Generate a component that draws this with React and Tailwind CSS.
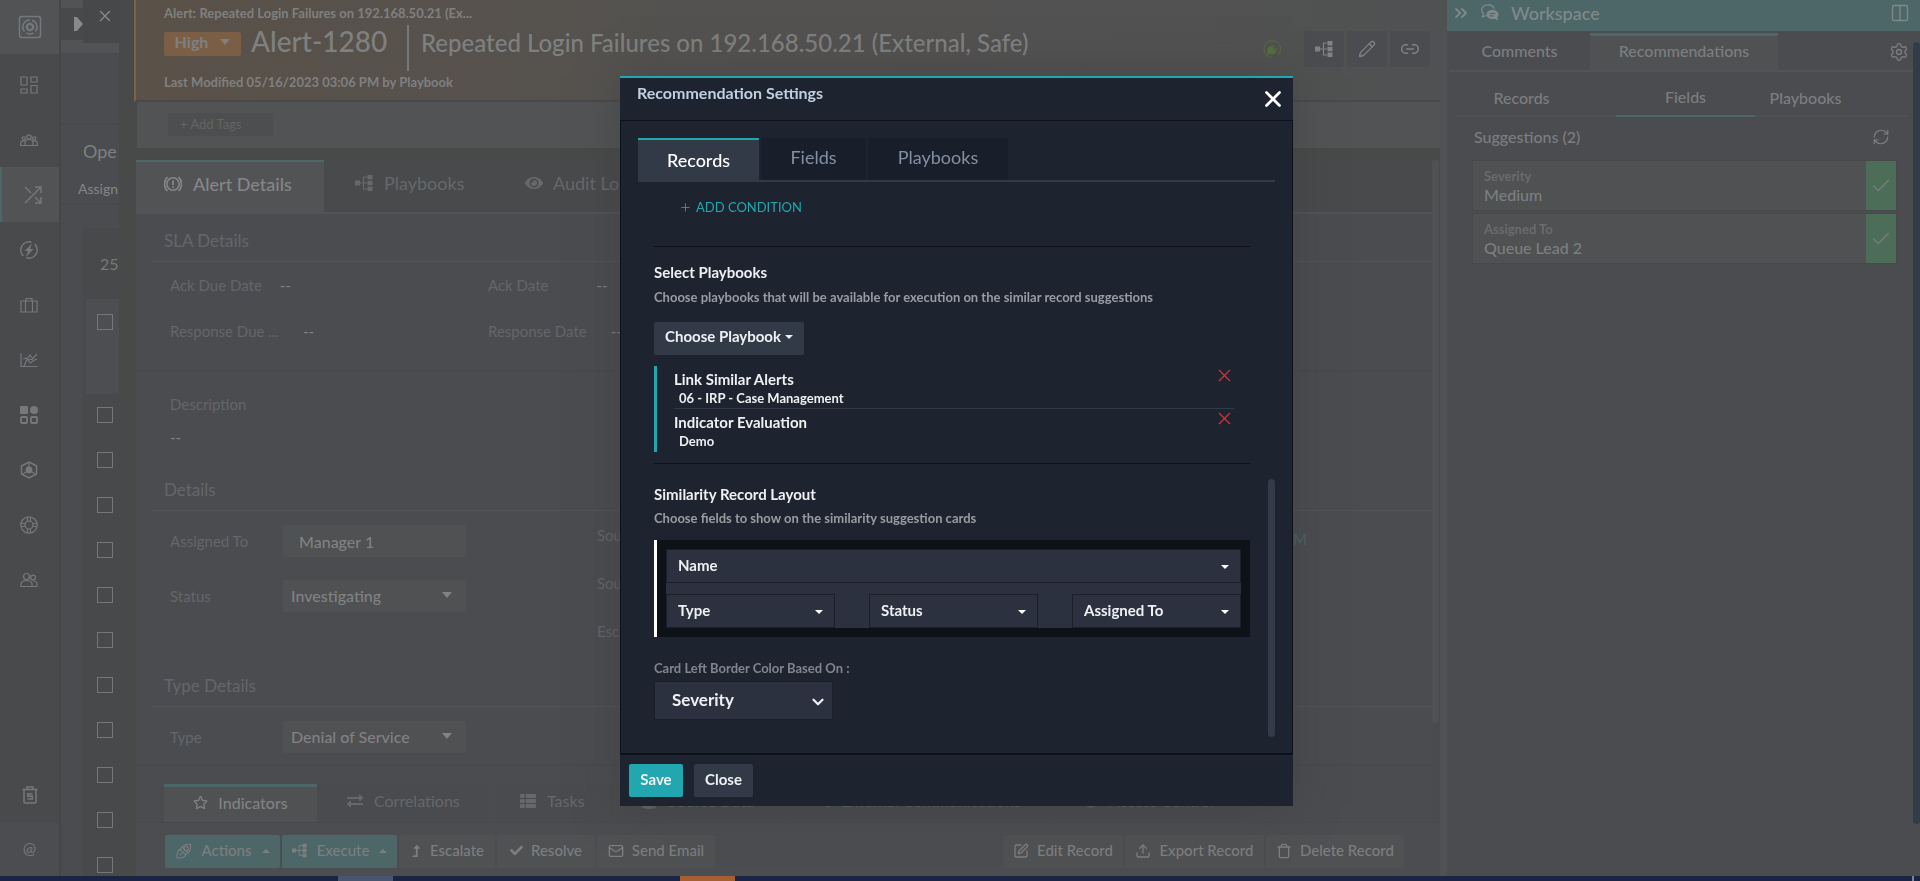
import React from "react"
import {
  X,
  ChevronsRight,
  Check,
  ChevronDown,
  Settings,
  RefreshCw,
  Columns2,
  Pencil,
  Upload,
  SquarePen,
  Trash,
  Mail,
  Plus,
  Link2,
} from "lucide-react"
import {
  FaCheck,
  FaEye,
  FaRegStar,
  FaThList,
  FaExchangeAlt,
  FaLevelUpAlt,
  FaDatabase,
  FaRegComments,
  FaGlobe,
} from "react-icons/fa"

const Svg = ({ size = 18, className, children }) => (
  <svg
    width={size}
    height={size}
    viewBox="0 0 18 18"
    fill="none"
    stroke="currentColor"
    strokeWidth="1.2"
    className={className}
    aria-hidden="true"
  >
    {children}
  </svg>
)

const FlowIcon = ({ size = 18, className }) => (
  <Svg size={size} className={className}>
    <path d="M0 6.500h5v5H0zM12.500 1h5v4.500h-5zM12.500 6.700h5v4.600h-5zM12.500 12.500h5V17h-5z" fill="currentColor" stroke="none" />
    <path d="M5 9h7.500M12.500 3H8.500v12h4" />
  </Svg>
)

const LogoIcon = () => (
  <svg width="24" height="24" viewBox="0 0 24 24" fill="none" stroke="currentColor" strokeWidth="1.500" aria-hidden="true">
    <rect x="1.500" y="1.500" width="21" height="21" rx="2.500" />
    <path d="M6.500 16.500A7 7 0 0 1 12 5M14 5.300a7 7 0 0 1 3.500 11M15.500 18a7 7 0 0 1-7 0" />
    <circle cx="12" cy="12" r="3" strokeWidth="2.200" />
    <path d="M12 7.500V9M12 15v1.500M7.500 12H9M15 12h1.500" />
  </svg>
)

const DashboardIcon = () => (
  <Svg>
    <path d="M1 1h6v8H1zM11 1h6v5h-6zM1 13h6v4H1zM11 9.500h6V17h-6z" />
  </Svg>
)

const TeamIcon = () => (
  <Svg>
    <circle cx="9" cy="6" r="2.200" />
    <circle cx="3.800" cy="7.500" r="1.700" />
    <circle cx="14.200" cy="7.500" r="1.700" />
    <path d="M5 14.500v-2.500a4 3.500 0 0 1 8 0v2.500zM5 14.500H.6v-2c0-2 2-3 4.400-2.500M13 14.500h4.400v-2c0-2-2-3-4.400-2.500" />
  </Svg>
)

const ShuffleIcon = () => (
  <Svg className="ml-2">
    <path d="M1 17 17 1M11 1h6v6M1 1l6 6M11 11l6 6M17 11v6h-6" strokeWidth="1.400" />
  </Svg>
)

const BoltIcon = () => (
  <Svg>
    <path d="M11.500 1.200a8.200 8.200 0 0 0-8.200 13.700M6.500 16.800a8.200 8.200 0 0 0 8.200-13.700" strokeWidth="1.500" />
    <path d="M12 2.500 4.500 10H8l-2 6 7.500-8H10z" fill="currentColor" stroke="none" />
  </Svg>
)

const CaseIcon = () => (
  <Svg>
    <path d="M1 5h16v11H1zM5.500 5v11M12.500 5v11M6 5V2.500h6V5" />
  </Svg>
)

const ChartIcon = () => (
  <Svg>
    <path d="M1 2.500v13h16.500M4 15l3-6.500h5L17 3M3.500 8l3-1 4 5 3-2.500 3.500-1.500M8 7l2-3 3 4" />
  </Svg>
)

const WidgetIcon = () => (
  <Svg>
    <rect x="0" y="0" width="8" height="8" rx="1" fill="currentColor" stroke="none" />
    <circle cx="14" cy="4" r="4" fill="currentColor" stroke="none" />
    <rect x="1" y="11" width="6" height="6" rx="1" strokeWidth="1.800" />
    <rect x="11" y="11" width="6" height="6" rx="1" strokeWidth="1.800" />
  </Svg>
)

const HexIcon = () => (
  <Svg>
    <path d="M9 1l7.500 4v8L9 17l-7.500-4V5z" strokeWidth="1.500" />
    <circle cx="9" cy="9" r="3.400" fill="currentColor" stroke="none" />
    <path d="M9 1v8M9 9l-6 4M9 9l6 4" />
  </Svg>
)

const LifebuoyIcon = () => (
  <Svg>
    <circle cx="9" cy="9" r="8.200" />
    <circle cx="9" cy="9" r="4" />
    <path d="M7.500 1v4M10.500 1v4M7.500 13v4M10.500 13v4M1 7.500h4M1 10.500h4M13 7.500h4M13 10.500h4" />
  </Svg>
)

const UsersIcon = () => (
  <Svg>
    <circle cx="6.500" cy="5.500" r="3" />
    <circle cx="13" cy="6.500" r="2.400" />
    <path d="M1 15.500v-2c0-2.500 2-4 5.500-4s5.500 1.500 5.500 4v2zM12 15.500h5V13c0-2-1.500-3-4-3" />
  </Svg>
)

const RecycleIcon = () => (
  <Svg>
    <path d="M1.500 3.500h15M6 3.500V1h6v2.500M3 4v12c0 .6.4 1 1 1h10c.6 0 1-.4 1-1V4" strokeWidth="1.500" />
    <path d="M11.500 8H6.700v2.300h4.600v2.600H6.500" strokeWidth="1.500" />
  </Svg>
)

const AlertIcon = () => (
  <Svg>
    <circle cx="9" cy="9" r="6.200" strokeWidth="1.600" />
    <path d="M9 5.500V10M9 11.300v1.500" strokeWidth="1.800" />
    <path d="M3.500 2a9.500 9.500 0 0 0 0 14M14.500 2a9.500 9.500 0 0 1 0 14" strokeWidth="1.600" />
  </Svg>
)

const CapsuleIcon = () => (
  <Svg size={16}>
    <path d="M7 4.500C9 2 12 1 16.500 1.500 17 6 16 9 13.500 11zM4.500 7 11 13.500M7 4.500 4.500 7l6.500 6.500 2.500-2.500z" />
    <circle cx="11.500" cy="6.500" r="2.500" />
    <path d="M4.500 7C1.500 8.500.8 12.500 1.200 16.800 5.500 17.200 9.500 16.500 11 13.500M4 14l3-3" />
  </Svg>
)

const PlugIcon = () => (
  <svg width="18" height="18" viewBox="0 0 18 18" fill="none" stroke="currentColor" aria-hidden="true">
    <path d="M15 15A8.300 8.300 0 1 0 9 17.300" strokeWidth="1" />
    <path d="M3.500 14.500l1.300-2.300c-1.300-2.400-.3-5.200 2.700-6.200l.8 1 2.200-2.200.9.900L9.700 7.500l2 2 2-1.600.7.900-2 2 .7.900c-1.200 2.600-4 3.300-6.300 2z" fill="currentColor" stroke="none" />
  </svg>
)

const ChatIcon = () => (
  <Svg>
    <path d="M5 11.500 1.500 13l1-3C1.300 8.800.7 7.500.7 6c0-3 2.800-5.200 6.300-5.200 3 0 5.600 1.700 6.200 4" />
    <path d="M11.500 6C8 6 5.500 8 5.500 10.500S8 15 11.500 15c.8 0 1.500-.1 2.200-.3l3.500 1.800-1-3c.8-.8 1.300-1.800 1.300-3C17.500 8 15 6 11.500 6z" fill="currentColor" stroke="none" />
    <path d="M8.500 9.500h6M8.500 11.800h4" stroke="#4d6668" />
  </Svg>
)

const Caret = ({ className }) => (
  <svg width="8" height="4" viewBox="0 0 8 4" className={className} aria-hidden="true">
    <path d="M0 0h8L4 4z" fill="currentColor" />
  </svg>
)

const navItems = [
  { name: "Dashboard", icon: <DashboardIcon /> },
  { name: "Queues", icon: <TeamIcon /> },
  { name: "Incident Response", icon: <ShuffleIcon />, active: true },
  { name: "Automation", icon: <BoltIcon /> },
  { name: "Cases", icon: <CaseIcon /> },
  { name: "Reports", icon: <ChartIcon /> },
  { name: "Widgets", icon: <WidgetIcon /> },
  { name: "Content Hub", icon: <HexIcon /> },
  { name: "Help", icon: <LifebuoyIcon /> },
  { name: "Users", icon: <UsersIcon /> },
]

const NavBar = () => (
  <nav className="w-[61px] shrink-0 flex flex-col bg-[#484a4b] border-r-2 border-[#444647] text-[#76797c]">
    <a href="#home" aria-label="Home" className="h-[54px] shrink-0 flex items-center justify-center bg-[#515354]">
      <LogoIcon />
    </a>
    <div className="pt-[3px] flex flex-col pr-px">
      {navItems.map((item) => (
        <a
          key={item.name}
          href="#nav"
          aria-label={item.name}
          className={
            item.active
              ? "h-[55px] -mr-px pr-1 flex items-center justify-center bg-[#515354] border-l-2 border-[#4d6668]"
              : "h-[55px] flex items-center justify-center"
          }
        >
          {item.icon}
        </a>
      ))}
    </div>
    <a href="#bin" aria-label="Recycle bin" className="mt-auto h-14 flex items-center justify-center">
      <RecycleIcon />
    </a>
    <a href="#mentions" aria-label="Mentions" className="h-[53px] flex items-center justify-center bg-[#4c4d50] text-base pb-1">
      @
    </a>
  </nav>
)

const rows = [1, 2, 3, 4, 5, 6, 7, 8, 9, 10, 11]

const QueueColumn = () => (
  <div className="w-[73px] shrink-0 flex bg-[#484949] overflow-hidden">
    <div className="w-[58px] flex flex-col bg-[#4b4c50] overflow-hidden whitespace-nowrap">
      <div className="h-[53px] shrink-0 bg-[#515354] flex">
        <div className="mt-2 h-8 w-[22px] shrink-0 bg-[#47494a] flex items-center justify-end">
          <svg width="9" height="14" viewBox="0 0 9 14" className="text-[#87898a]" aria-hidden="true">
            <path d="M0 0h3l6 7-6 7H0z" fill="currentColor" />
          </svg>
        </div>
        <button aria-label="Close panel" className="h-[43px] w-9 shrink-0 bg-[#464849] flex items-center pb-3 pl-[13px] text-[#87898a]">
          <X size={18} strokeWidth={1.8} className="shrink-0" />
        </button>
      </div>
      <div className="h-[72px] shrink-0 border-t border-b-2 border-[#48494b]" />
      <div className="h-[80px] shrink-0 border-b-2 border-[#48494b] text-[#7e8082]">
        <p className="pl-[22px] pt-3 text-lg leading-7">Ope</p>
        <p className="pl-[17px] pt-2.5 text-sm leading-7 text-[#848687]">Assign</p>
      </div>
      <div className="ml-[22px] mt-[23px] flex-1 bg-[#47494a] text-[#77797a] overflow-hidden">
        <p className="h-[71px] pl-[17px] pt-5 text-base leading-8">25</p>
        <div className="ml-[3px] h-[95px] bg-[#4d4e51] pl-[11px] pt-[15px]">
          <input type="checkbox" aria-label="Select record" className="block appearance-none w-4 h-4 border border-[#747677]" />
        </div>
        {rows.map((row) => (
          <div key={row} className="h-[45px] pl-3.5 pt-[13px]">
            <input type="checkbox" aria-label={`Select record ${row}`} className="block appearance-none w-4 h-4 border border-[#747677]" />
          </div>
        ))}
      </div>
    </div>
  </div>
)

const AlertHeader = () => (
  <header className="h-[102px] shrink-0 flex items-start border-l-2 border-l-[#7d6249] border-b-2 border-b-[#48494a] bg-linear-to-r from-[#5a5148] via-[#545250] via-40% to-[#505152] text-[#7f8080] whitespace-nowrap">
    <div className="pl-7 pt-1 flex flex-col">
      <p className="text-[13px] font-bold leading-[18px]">Alert: Repeated Login Failures on 192.168.50.21 (Ex...</p>
      <div className="flex items-start">
        <button className="mt-2.5 h-6 w-[77px] rounded-xs bg-[#7a5f46] flex items-center justify-center gap-3 pb-1 text-base font-bold">
          High
          <svg width="10" height="6" viewBox="0 0 10 6" aria-hidden="true"><path d="M0 0h10L5 6z" fill="currentColor" /></svg>
        </button>
        <h1 className="ml-2.5 w-[158px] mt-[3px] h-[46px] border-r-2 border-[#76797c] text-[28px] leading-8 font-medium">Alert-1280</h1>
        <p className="pl-3 pt-[5px] text-2xl leading-8 font-medium">Repeated Login Failures on 192.168.50.21 (External, Safe)</p>
      </div>
      <p className="mt-0.5 text-[13px] font-bold leading-[18px]">Last Modified 05/16/2023 03:06 PM by Playbook</p>
    </div>
    <div className="ml-auto pr-2.5 pt-[31px] flex items-center gap-[3px] text-[#808284]">
      <span className="mr-5 text-[#56703f]"><PlugIcon /></span>
      <button aria-label="Playbooks" className="w-10 h-9 rounded-xs bg-[#4b4c50] flex items-center justify-center"><FlowIcon /></button>
      <button aria-label="Edit" className="w-10 h-9 rounded-xs bg-[#4b4c50] flex items-center justify-center"><Pencil size={18} strokeWidth={1.8} /></button>
      <button aria-label="Copy link" className="w-10 h-9 rounded-xs bg-[#4b4c50] flex items-center justify-center"><Link2 size={20} strokeWidth={1.8} /></button>
    </div>
  </header>
)

const Section = ({ title, children }) => (
  <section>
    <h2 className="ml-4 border-b border-[#515354] pl-3 pb-2 text-[17px] leading-6 text-[#646669]">{title}</h2>
    {children}
  </section>
)

const DetailSelect = ({ id, label, value }) => (
  <div className="flex items-center">
    <label htmlFor={id} className="w-[113px] text-[15px] text-[#646669]">{label}</label>
    <div className="relative">
      <select id={id} className="block appearance-none w-[183px] h-8 rounded-xs bg-[#4f5152] pl-2 text-base font-medium text-[#808284]">
        <option>{value}</option>
      </select>
      <svg width="10" height="6" viewBox="0 0 10 6" className="absolute right-3.5 top-3 pointer-events-none text-[#808284]" aria-hidden="true">
        <path d="M0 0h10L5 6z" fill="currentColor" />
      </svg>
    </div>
  </div>
)

const bottomTabs = [
  { name: "Correlations", icon: <FaExchangeAlt size={16} />, style: "w-[173px] pl-[30px]" },
  { name: "Tasks", icon: <FaThList size={16} />, style: "w-[126px] pl-[30px]" },
  { name: "Source Data", icon: <FaDatabase size={16} />, style: "w-[171px] pl-[25px]" },
  { name: "External Communications", icon: <FaRegComments size={16} />, style: "w-[265px] pl-[27px]" },
  { name: "Access Control", icon: <FaGlobe size={14} />, style: "w-[192px] pl-8" },
]

const Action = ({ icon, children, teal, width }) => (
  <button
    className={
      teal
        ? `${width} h-[33px] rounded-xs bg-[#4d6668] flex items-center justify-center gap-2.5 pb-0.5 text-[15px] font-medium`
        : `${width} h-[33px] rounded-xs bg-[#505152] flex items-center justify-center gap-2 pb-0.5 text-[15px] font-medium`
    }
  >
    {icon}
    {children}
    {teal && <Caret className="rotate-180" />}
  </button>
)

const AlertPanel = () => (
  <main className="flex-1 min-w-0 flex flex-col bg-[#484949] border-r-[7px] border-[#505152]">
    <AlertHeader />
    <div className="ml-[3px] h-[46px] shrink-0 bg-[#515354] pl-[31px] pt-[11px]">
      <input
        aria-label="Add tags"
        placeholder="+ Add Tags"
        className="block w-[105px] h-[23px] rounded-xs bg-[#4d4e4f] px-3 pb-0.5 text-[13px] placeholder:text-[#646566]"
      />
    </div>
    <div className="flex-1 min-h-0 flex flex-col ml-0.5 pt-3 overflow-hidden">
      <div className="flex-1 min-h-0 flex">
        <div className="flex-1 min-w-0 flex flex-col bg-[#4b4c50]">
          <div className="h-[54px] shrink-0 flex bg-[#494a4c] border-b-2 border-[#515354] text-lg text-[#66686a]">
            <button className="h-[54px] w-[188px] shrink-0 bg-[#515354] border-t-2 border-[#4d6668] flex items-center pb-2 pl-7 gap-[11px] font-medium text-[#858788]">
              <AlertIcon />
              Alert Details
            </button>
            <button className="w-[175px] flex items-center pb-1.5 pl-[31px] gap-[11px]">
              <FlowIcon />
              Playbooks
            </button>
            <button className="flex items-center pb-1.5 pl-[26px] gap-2.5">
              <FaEye size={18} />
              Audit Logs
            </button>
          </div>

          <div className="pt-[15px] text-[15px] text-[#646669]">
            <Section title="SLA Details">
              <div className="pl-[34px] grid grid-cols-[318px_1fr] content-start leading-[46px] h-[110px] border-b-2 border-[#48494b]">
                <p>Ack Due Date<span className="ml-[18px] text-[#808284]">--</span></p>
                <p>Ack Date<span className="ml-12 text-[#808284]">--</span></p>
                <p>Response Due ...<span className="ml-6 text-[#808284]">--</span></p>
                <p>Response Date<span className="ml-6 text-[#808284]">--</span></p>
              </div>
              <div className="pl-[34px] pt-4 h-[106px] leading-[33px]">
                <p>Description</p>
                <p className="text-[#808284]">--</p>
              </div>
            </Section>
            <Section title="Details">
              <div className="pl-[34px] pr-[125px] flex">
                <div className="w-[427px] pt-3.5 flex flex-col gap-[23px]">
                  <div className="flex items-center">
                    <label htmlFor="assigned" className="w-[113px]">Assigned To</label>
                    <input id="assigned" defaultValue="Manager 1" className="w-[183px] h-8 rounded-xs bg-[#4f5152] pl-4 text-base font-medium text-[#808284]" />
                  </div>
                  <DetailSelect id="status" label="Status" value="Investigating" />
                </div>
                <div className="leading-[48px]">
                  <p>Source</p>
                  <p>Source ID</p>
                  <p>Escalated</p>
                </div>
                <p className="ml-auto pt-3.5 leading-7 text-[#4d6668]">05/16/2023 03:06 PM</p>
              </div>
            </Section>
            <div className="pt-[19px]">
              <Section title="Type Details">
                <div className="pl-[34px] pt-3.5 h-[59px] border-b-2 border-[#48494b]">
                  <DetailSelect id="type" label="Type" value="Denial of Service" />
                </div>
              </Section>
            </div>
          </div>

          <div className="mt-auto h-[38px] shrink-0 flex pl-7 text-base text-[#66686a] whitespace-nowrap">
            <button className="w-[153px] shrink-0 bg-[#505152] border-t-3 border-[#4d6668] flex items-center justify-center gap-2.5 pb-1 font-medium text-[#808284]">
              <FaRegStar size={15} />
              Indicators
            </button>
            {bottomTabs.map((tab) => (
              <button key={tab.name} className={`${tab.style} shrink-0 flex items-center gap-[11px] pb-1 bg-[#4a4b4e] border-r border-[#4c4d50]`}>
                {tab.icon}
                {tab.name}
              </button>
            ))}
          </div>
        </div>
        <div className="w-2 bg-[#4a4b4c]">
          <div className="h-[85%] w-[7px] rounded-full bg-[#505152]" />
        </div>
      </div>
      <div className="h-[54px] shrink-0 flex items-center gap-0.5 bg-[#4c4d50] border-t border-[#48494b] pl-[29px] pr-9 pt-3 pb-2 text-[#7c7e80]">
        <Action teal width="w-[115px]" icon={<CapsuleIcon />}>Actions</Action>
        <Action teal width="w-[115px]" icon={<FlowIcon size={15} />}>Execute</Action>
        <Action width="w-24" icon={<FaLevelUpAlt size={12} />}>Escalate</Action>
        <Action width="w-[98px]" icon={<FaCheck size={13} />}>Resolve</Action>
        <Action width="w-[118px]" icon={<Mail size={16} />}>Send Email</Action>
        <span className="flex-1" />
        <Action width="w-[120px]" icon={<SquarePen size={16} />}>Edit Record</Action>
        <Action width="w-[139px]" icon={<Upload size={16} />}>Export Record</Action>
        <Action width="w-[138px]" icon={<Trash size={16} />}>Delete Record</Action>
      </div>
    </div>
  </main>
)

const suggestions = [
  { label: "Severity", value: "Medium" },
  { label: "Assigned To", value: "Queue Lead 2" },
]

const Workspace = () => (
  <aside className="w-[473px] shrink-0 flex flex-col bg-[#4b4c50] text-base text-[#7c7e80]">
    <div className="h-[31px] shrink-0 flex items-center bg-[#4d6668] pl-1 pr-2.5 pb-1.5 text-[#808a8b]">
      <ChevronsRight size={20} strokeWidth={2.2} />
      <span className="ml-2.5 mr-3"><ChatIcon /></span>
      <h2 className="text-lg font-medium">Workspace</h2>
      <Columns2 size={20} strokeWidth={1.6} className="ml-auto" />
    </div>
    <div className="flex-1 flex">
      <div className="flex-1 flex flex-col">
        <div className="mt-0.5 h-[39px] flex border-b-2 border-[#515354] ml-0.5">
          <button className="w-[141px] font-medium pb-0.5">Comments</button>
          <button className="w-[188px] font-medium bg-[#505152] border-t-3 border-[#4d6668] pb-1">Recommendations</button>
          <button aria-label="Settings" className="ml-auto pr-1"><Settings size={20} strokeWidth={1.6} /></button>
        </div>
        <div className="ml-2 mr-[5px] mt-0.5 h-[43px] flex">
          <button className="w-[161px] pt-1.5 pr-7 border-b-2 border-[#505152] font-medium">Records</button>
          <button className="w-[139px] pt-1 border-b-2 border-[#4d6668] font-medium">Fields</button>
          <button className="flex-1 pt-1.5 pr-[52px] border-b-2 border-[#505152] font-medium">Playbooks</button>
        </div>
        <div className="pl-[27px] pr-[23px] h-[43px] pb-1 flex items-center justify-between">
          <p className="font-medium">Suggestions (2)</p>
          <button aria-label="Refresh"><RefreshCw size={18} strokeWidth={1.6} /></button>
        </div>
        <div className="ml-[25px] mr-4 flex flex-col gap-0.5">
          {suggestions.map((item) => (
            <div key={item.label} className="h-[51px] flex bg-[#505152] border border-[#48494b]">
              <div className="flex-1 pl-[11px] pt-[7px]">
                <p className="text-[13px] leading-4 font-bold text-[#696b6c]">{item.label}</p>
                <p className="leading-[22px] font-medium">{item.value}</p>
              </div>
              <button aria-label={`Apply ${item.label}`} className="w-[30px] bg-[#4c6d57] flex items-center justify-center">
                <Check size={22} strokeWidth={1.4} />
              </button>
            </div>
          ))}
        </div>
      </div>
      <div className="w-[7px] mt-[11px] mb-[52px] rounded-full bg-[#333b49]" />
    </div>
  </aside>
)

const playbooks = [
  { name: "Link Similar Alerts", collection: "06 - IRP - Case Management" },
  { name: "Indicator Evaluation", collection: "Demo" },
]

const CardSelect = ({ value }) => (
  <div className="relative">
    <select
      aria-label={`${value} field`}
      className="block appearance-none w-full h-[34px] border border-[#1a1f29] bg-[#2b313f] pl-[11px] pb-0.5 text-[15px] font-bold text-[#eef0f2]"
    >
      <option>{value}</option>
    </select>
    <Caret className="absolute right-3 top-4 pointer-events-none text-white" />
  </div>
)

const RecommendationSettings = () => (
  <div className="fixed inset-0 flex items-start justify-center pt-[76px] pr-[7px]">
    <div
      role="dialog"
      aria-label="Recommendation Settings"
      className="w-[673px] bg-[#1d2430] border-t-2 border-[#22a7b0] text-[#eef0f2] shadow-[0_0_40px_rgba(60,60,60,0.5)]"
    >
      <div className="h-[42px] flex items-start justify-between pl-[17px] pr-[7px]">
        <h2 className="pt-[3px] text-base font-bold text-[#c0d0e0]">Recommendation Settings</h2>
        <button aria-label="Close dialog" className="pt-2 text-white">
          <X size={26} strokeWidth={2.5} />
        </button>
      </div>

      <div className="border-x border-t border-[#0d1219] pl-[17px] pr-[17px] pt-[17px]">
        <div role="tablist" className="h-11 flex gap-0.5 border-b-2 border-[#333a47] text-lg text-[#8490a2]">
          <button role="tab" className="w-[121px] h-11 bg-[#333a47] border-t-2 border-[#22a7b0] pb-0.5 font-medium text-white">Records</button>
          <button role="tab" className="w-[105px] bg-[#181f2a] pb-1">Fields</button>
          <button role="tab" className="w-[140px] bg-[#181f2a] pb-1">Playbooks</button>
        </div>

        <div className="flex items-end justify-between pb-4">
          <div className="w-[596px] ml-4">
            <button className="ml-[25px] mt-4 flex items-center gap-1 text-[13px] leading-[18px] text-[#22a7b0]">
              <Plus size={13} strokeWidth={1.5} />
              ADD CONDITION
            </button>

            <hr className="mt-[30px] border-[#0d1219]" />
            <h3 className="mt-[15px] text-[15px] leading-5 font-bold">Select Playbooks</h3>
            <p className="mt-1.5 text-[13px] leading-[18px] font-bold text-[#999ca1]">
              Choose playbooks that will be available for execution on the similar record suggestions
            </p>
            <button className="mt-4 w-[150px] h-[33px] rounded-xs bg-[#333a47] flex items-center justify-center gap-1 pb-1 text-[15px] font-bold">
              Choose Playbook
              <Caret />
            </button>

            <ul className="mt-[11px] border-l-3 border-[#22a7b0] pl-[17px] pr-4">
              {playbooks.map((item) => (
                <li key={item.name} className="h-[43px] flex justify-between border-b border-[#333a47] last:border-b-0 pt-[5px]">
                  <div>
                    <p className="text-[15px] leading-4 font-bold">{item.name}</p>
                    <p className="pl-[5px] pt-0.5 text-[13px] leading-[18px] font-bold">{item.collection}</p>
                  </div>
                  <button aria-label={`Remove ${item.name}`} className="self-start text-[#d0353b]">
                    <svg width="19" height="7" viewBox="0 0 19 7" overflow="visible" stroke="currentColor" strokeWidth="1.200" aria-hidden="true">
                      <path d="M4-1l11 11M15-1L4 10" />
                    </svg>
                  </button>
                </li>
              ))}
            </ul>

            <hr className="mt-[11px] border-[#0d1219]" />
            <h3 className="mt-5 text-[15px] leading-5 font-bold">Similarity Record Layout</h3>
            <p className="mt-[5px] text-[13px] leading-[18px] font-bold text-[#999ca1]">
              Choose fields to show on the similarity suggestion cards
            </p>
            <div className="mt-[13px] border-l-3 border-white bg-[#0d1219] p-[9px]">
              <div className="bg-[#2b313f]">
                <CardSelect value="Name" />
                <div className="mt-[11px] grid grid-cols-3 gap-[34px]">
                  <CardSelect value="Type" />
                  <CardSelect value="Status" />
                  <CardSelect value="Assigned To" />
                </div>
              </div>
            </div>

            <label htmlFor="border-color" className="mt-[22px] block text-[13px] leading-[18px] font-bold text-[#81858d]">
              Card Left Border Color Based On :
            </label>
            <div className="relative w-[179px] mt-1">
              <select
                id="border-color"
                className="block appearance-none w-full h-[39px] border border-[#1a1f29] bg-[#2b313f] pl-[17px] pb-0.5 text-[17px] font-bold text-[#eef0f2]"
              >
                <option>Severity</option>
              </select>
              <ChevronDown size={18} strokeWidth={3} className="absolute right-1.5 top-3 pointer-events-none" />
            </div>
            <div className="h-[17px]" />
          </div>
          <div className="w-[7px] h-[258px] rounded-full bg-[#333b49]" />
        </div>
      </div>

      <div className="flex gap-[11px] border-t-2 border-[#0d1219] px-[9px] py-[9px] text-[15px] font-bold">
        <button className="w-[54px] h-[33px] rounded-xs bg-[#22a7b0] pb-0.5">Save</button>
        <button className="w-[59px] h-[33px] rounded-xs bg-[#333a47] pb-0.5">Close</button>
      </div>
    </div>
  </div>
)

const App = () => (
  <div className="h-screen flex flex-col overflow-hidden bg-[#484949] font-['Lato',sans-serif]">
    <div className="flex-1 min-h-0 flex">
      <NavBar />
      <QueueColumn />
      <AlertPanel />
      <Workspace />
    </div>
    <div className="h-[5px] shrink-0 flex bg-[#1a2544] pr-1.5">
      <div className="ml-[338px] w-[55px] bg-[#49546f]" />
      <div className="ml-[287px] w-[55px] bg-[#a65f33]" />
      <div className="ml-auto w-0.5 bg-[#7b8496]" />
    </div>
    <RecommendationSettings />
  </div>
)

export default App
